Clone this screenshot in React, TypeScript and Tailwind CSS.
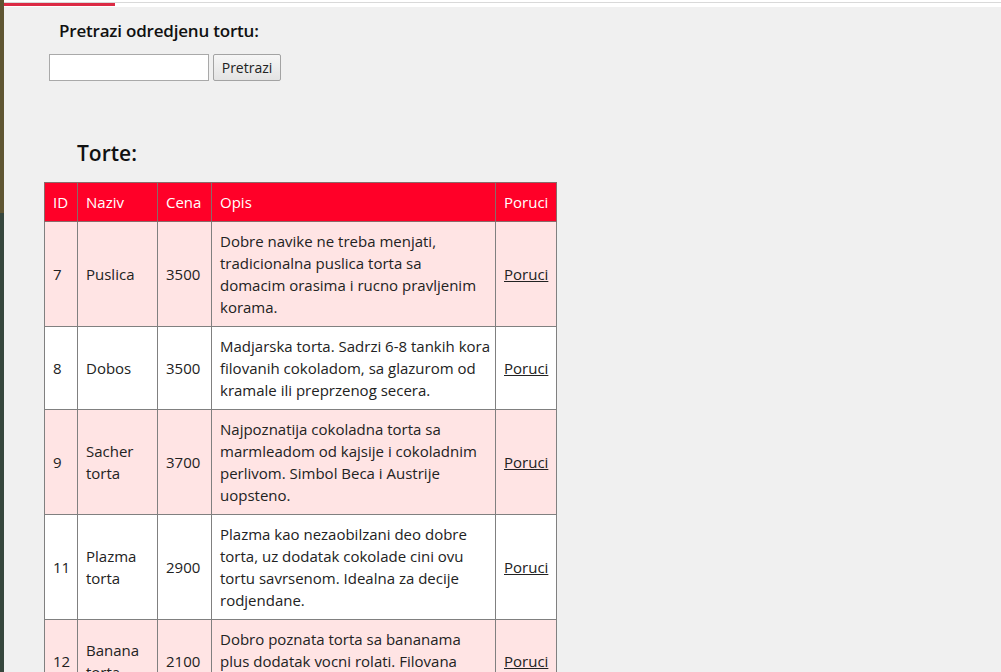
import React from "react";

type Torta = { id: number; naziv: string; cena: number; opis: string[] };

const torte: Torta[] = [
  { id: 7, naziv: "Puslica", cena: 3500, opis: ["Dobre navike ne treba menjati,", "tradicionalna puslica torta sa", "domacim orasima i rucno pravljenim", "korama."] },
  { id: 8, naziv: "Dobos", cena: 3500, opis: ["Madjarska torta. Sadrzi 6-8 tankih kora", "filovanih cokoladom, sa glazurom od", "kramale ili preprzenog secera."] },
  { id: 9, naziv: "Sacher torta", cena: 3700, opis: ["Najpoznatija cokoladna torta sa", "marmleadom od kajsije i cokoladnim", "perlivom. Simbol Beca i Austrije", "uopsteno."] },
  { id: 11, naziv: "Plazma torta", cena: 2900, opis: ["Plazma kao nezaobilzani deo dobre", "torta, uz dodatak cokolade cini ovu", "tortu savrsenom. Idealna za decije", "rodjendane."] },
  { id: 12, naziv: "Banana torta", cena: 2100, opis: ["Dobro poznata torta sa bananama", "plus dodatak vocni rolati. Filovana", "cokoladnim filom i bananama."] },
];

export default function App() {
  return (
    <div className="flex min-h-[672px] w-full font-['Open_Sans','Lato',sans-serif] text-[#222]">
      <div className="w-[4px] shrink-0 bg-[linear-gradient(to_bottom,#5f5532_0px,#5f5532_213px,#36463d_213px,#36463d_100%)]" />
      <div className="flex-1 bg-[#f0f0f0]">
        <div className="h-[7px] bg-white">
          <div className="h-[2px]" />
          <div className="relative h-[1px] bg-[#d9d9d9]" />
          <div className="-mt-[1px] h-[4px] w-[111px] bg-[#dc2b45]" />
        </div>

        <div className="ml-[55px] mt-[13px] text-[17px] font-semibold leading-[22px] tracking-[-0.2px] text-[#111]">
          Pretrazi odredjenu tortu:
        </div>
        <div className="ml-[45px] mt-[12px] flex gap-[4px]">
          <input
            type="text"
            className="h-[27px] w-[160px] border border-[#a9a9a9] bg-white px-1 text-[14px] outline-none"
          />
          <button className="h-[27px] w-[68px] rounded-[2px] border border-[#a3a3a3] bg-[linear-gradient(#f6f6f6,#e3e3e3)] text-[14px] text-[#222]">
            Pretrazi
          </button>
        </div>

        <h2 className="ml-[73px] mt-[57px] text-[21px] font-semibold leading-[30px] text-[#111]">Torte:</h2>

        <table className="ml-[40px] mt-[14px] w-[512px] table-fixed border-collapse border border-[#333] text-[15px] leading-[22px]">
          <colgroup>
            <col className="w-[33px]" />
            <col className="w-[80px]" />
            <col className="w-[54px]" />
            <col className="w-[284px]" />
            <col className="w-[61px]" />
          </colgroup>
          <thead>
            <tr className="bg-[#ff0028] text-white">
              <th className="h-[39px] border border-[#8a6a6a] px-[8px] text-left font-normal">ID</th>
              <th className="border border-[#8a6a6a] px-[8px] text-left font-normal">Naziv</th>
              <th className="border border-[#8a6a6a] px-[8px] text-left font-normal">Cena</th>
              <th className="border border-[#8a6a6a] px-[8px] text-left font-normal">Opis</th>
              <th className="border border-[#8a6a6a] px-[8px] text-left font-normal">Poruci</th>
            </tr>
          </thead>
          <tbody>
            {torte.map((t, i) => (
              <tr key={t.id} className={i % 2 === 0 ? "bg-[#ffe4e4]" : "bg-white"}>
                <td className="border border-[#808080] px-[8px] py-[8px] align-middle">{t.id}</td>
                <td className="border border-[#808080] px-[8px] py-[8px] align-middle">{t.naziv}</td>
                <td className="border border-[#808080] px-[8px] py-[8px] align-middle">{t.cena}</td>
                <td className="whitespace-nowrap border border-[#808080] px-[8px] py-[8px] align-middle">
                  {t.opis.map((line, j) => (
                    <React.Fragment key={j}>
                      {line}
                      {j < t.opis.length - 1 && <br />}
                    </React.Fragment>
                  ))}
                </td>
                <td className="border border-[#808080] px-[8px] py-[8px] align-middle">
                  <a href="#" className="text-[#222] underline">Poruci</a>
                </td>
              </tr>
            ))}
          </tbody>
        </table>
      </div>
    </div>
  );
}
